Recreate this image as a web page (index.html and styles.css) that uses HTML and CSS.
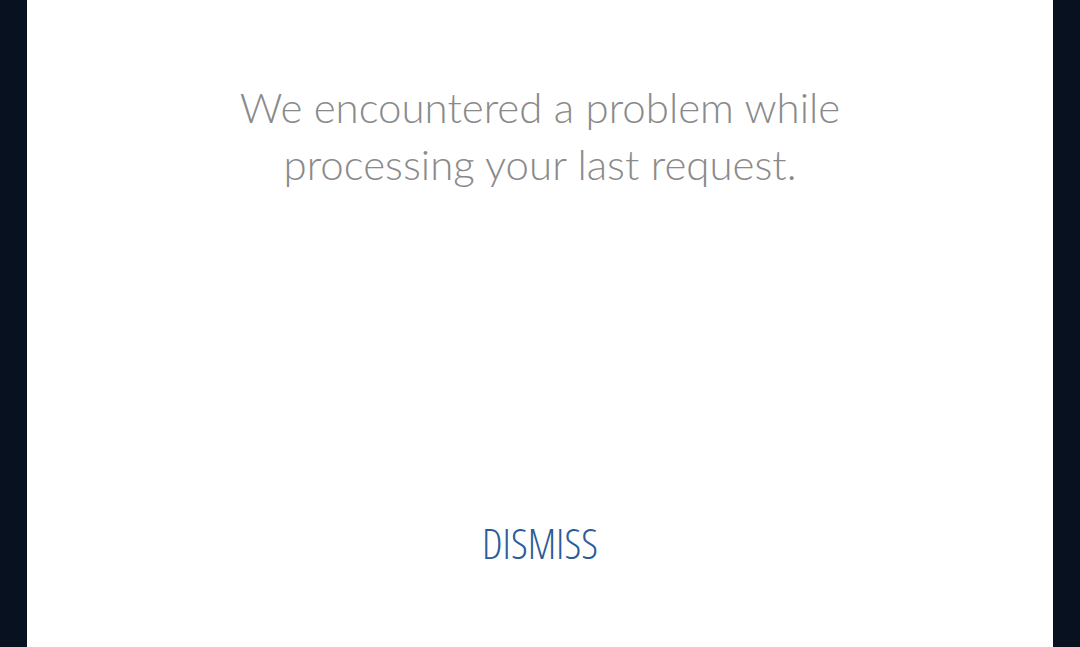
FILE: index.html
```html
<!DOCTYPE html>
<html>
<head>
<meta charset="utf-8">
<link rel="stylesheet" href="styles.css">
</head>
<body>
<div class="page">
  <div class="panel">
    <p class="message">We encountered a problem while<br>processing your last request.</p>
    <button class="dismiss">DISMISS</button>
  </div>
</div>
</body>
</html>
```
FILE: styles.css
```css
html, body {
  margin: 0;
  padding: 0;
  height: 100%;
  background: #07111f;
}
.page {
  height: 647px;
  display: flex;
  justify-content: center;
  padding-left: 27px;
  padding-right: 27px;
  box-sizing: border-box;
}
.panel {
  flex: 1;
  background: #ffffff;
  display: flex;
  flex-direction: column;
  align-items: center;
}
.message {
  margin: 79px 0 0 0;
  font-family: "Lato", sans-serif;
  font-weight: 300;
  font-size: 42px;
  line-height: 57px;
  letter-spacing: 0;
  color: #8a8a8a;
  text-align: center;
}
.dismiss {
  margin-top: 326px;
  border: none;
  background: none;
  padding: 0;
  font-family: "Open Sans", sans-serif;
  font-stretch: 75%;
  font-weight: 300;
  font-size: 42px;
  line-height: 48px;
  color: #2c5c96;
  cursor: pointer;
}
```
